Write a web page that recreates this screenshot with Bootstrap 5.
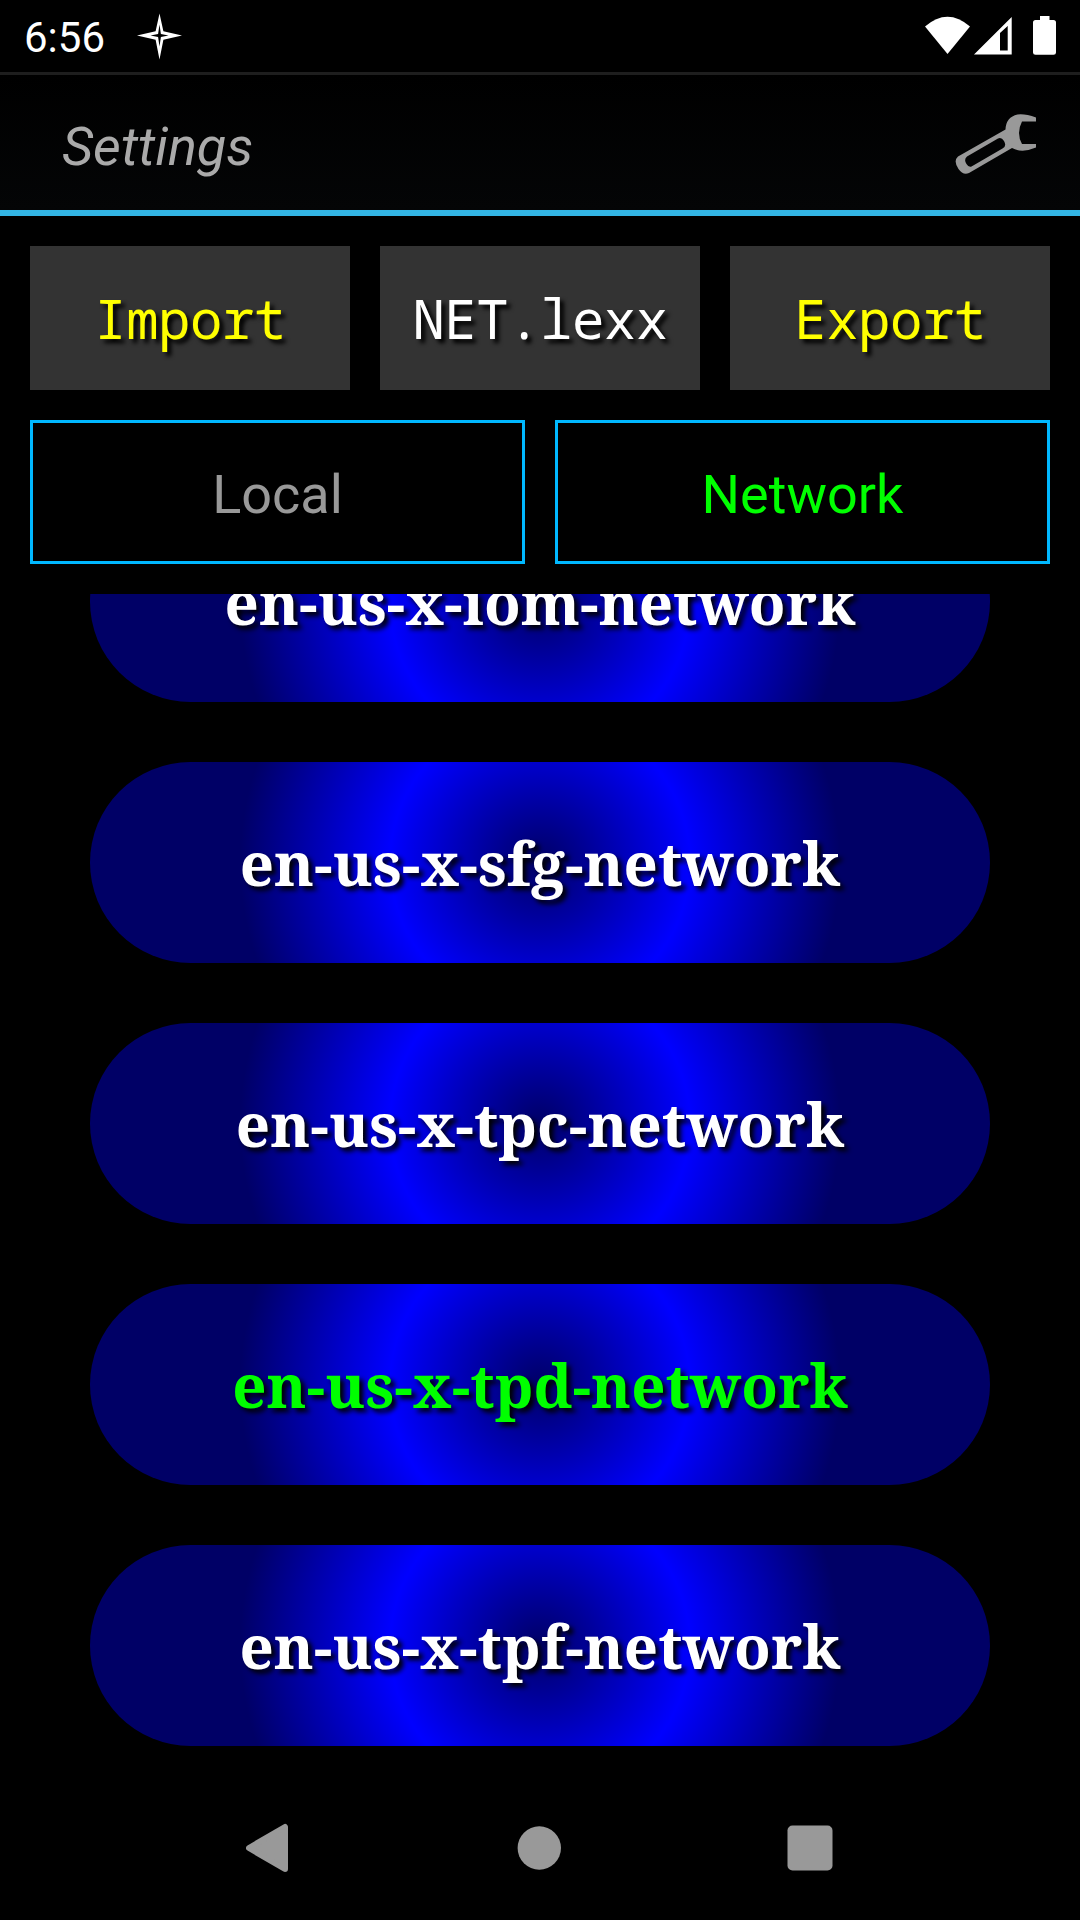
<!DOCTYPE html>
<html lang="en" data-bs-theme="dark">
<head>
<meta charset="utf-8">
<meta name="viewport" content="width=device-width, initial-scale=1">
<title>Settings</title>
<link rel="stylesheet" href="https://cdn.jsdelivr.net/npm/bootstrap@5.3.0/dist/css/bootstrap.min.css">
<style>
  body { background: #000; font-family: Roboto, sans-serif; height: 1920px; overflow: hidden; }
  .status-bar { height: 72px; padding: 0 24px 0 24px; color: #fff; font-size: 42px; line-height: 72px; }
  .clock { padding-top: 4px; }
  .app-bar { height: 144px; padding: 0 42px 0 62px; border-top: 3px solid #1e1e1e; border-bottom: 6px solid #33b5e5; background: linear-gradient(#000, #040506); }
  .app-title { color: #aaa; font-size: 54px; line-height: 1; font-style: italic; font-weight: 400; padding-top: 9px; }
  .panel { padding: 30px 30px 0; gap: 30px; }
  .tile { height: 144px; border: 0; border-radius: 0; background: #333; font-family: "Droid Sans Mono", "Noto Sans Mono", "DejaVu Sans Mono", monospace; font-size: 54px; letter-spacing: -.5px; line-height: 1; padding: 0; text-shadow: 4px 4px 4px #000; }
  .c-yellow { color: #ff0; }
  .c-lime { color: #0f0; }
  .c-gray { color: #999; }
  .tab-btn { height: 144px; border: 3px solid #00b8ff; border-radius: 0; background: #000; font-size: 54px; line-height: 1; padding: 5px 0 0; }
  .voices { height: 1182px; margin-top: 30px; padding: 0 90px; gap: 60px; }
  .voice { height: 201px; border: 0; border-radius: 101px; padding: 0; font-family: "Noto Serif", "DejaVu Serif", serif; font-weight: 700; font-size: 60px; letter-spacing: .05px; line-height: 1;
    background: radial-gradient(circle 300px at center, #006 0, #00f 50%, #006 100%); text-shadow: 4px 4px 5px #000; }
  .voice:first-child { margin-top: -93px; }
  .sys-nav { height: 144px; padding: 0 247px 0 246px; }
</style>
</head>
<body class="d-flex flex-column m-0">
  <header class="status-bar d-flex align-items-center justify-content-between flex-shrink-0">
    <div class="d-flex align-items-center">
      <span class="clock">6:56</span>
      <svg class="ms-4" width="60" height="72" viewBox="-.5 0 60 72"><path d="M30 13.500L33.900 31.200 52.500 35.500 33.900 39.800 30 59.500 26.100 39.800 7.500 35.500 26.100 31.200Z" fill="#fff"/><path d="M30 24.500L31.400 34 39 35.500 31.400 37 30 46.500 28.600 37 21 35.500 28.600 34Z" fill="#000"/></svg>
    </div>
    <svg width="146" height="72" viewBox="910 0 146 72" fill="#fff">
      <path d="M925 26.500Q947.500 7 970 26.500L947.500 54Z"/>
      <path fill-rule="evenodd" d="M974 54.500L1011.700 17V54.500ZM1000 33V50.500H1007.700V26Z"/>
      <path d="M1040 16h9.500v4h4q2.500 0 2.500 2.500v30q0 2.300-2.500 2.300h-18q-2.500 0-2.500-2.300v-30q0-2.500 2.500-2.500h4.500z"/>
    </svg>
  </header>

  <nav class="app-bar d-flex align-items-center justify-content-between flex-shrink-0">
    <h1 class="app-title mb-0">Settings</h1>
    <svg width="84" height="64" viewBox="954 111 84 64"><path fill="#999" fill-rule="evenodd" d="M1036 117.500V121.500H1022Q1016 133 1022 144H1036V147.500Q1022 153.500 1012 148L969 173Q963 175.500 958.500 169Q953 161 958 156.500L1005.500 129.500Q1006 117 1017.500 114.500Q1025 113.500 1036 117.500ZM998 138.500L967 156.500Q963.500 159.500 966.500 164Q968.500 167.500 971.500 166.500L1002.500 148.500Q1007 146.500 1004 141Q1001.500 137 998 138.500Z"/></svg>
  </nav>

  <main class="flex-shrink-0">
    <section class="panel d-flex">
      <button class="tile btn flex-fill w-100 c-yellow">Import</button>
      <button class="tile btn flex-fill w-100 text-white">NET.lexx</button>
      <button class="tile btn flex-fill w-100 c-yellow">Export</button>
    </section>
    <section class="panel d-flex">
      <button class="tab-btn btn flex-fill w-100 c-gray">Local</button>
      <button class="tab-btn btn flex-fill w-100 c-lime">Network</button>
    </section>
    <section class="voices d-flex flex-column overflow-hidden">
      <button class="voice btn flex-shrink-0 text-white">en-us-x-iom-network</button>
      <button class="voice btn flex-shrink-0 text-white">en-us-x-sfg-network</button>
      <button class="voice btn flex-shrink-0 text-white">en-us-x-tpc-network</button>
      <button class="voice btn flex-shrink-0 c-lime">en-us-x-tpd-network</button>
      <button class="voice btn flex-shrink-0 text-white">en-us-x-tpf-network</button>
    </section>
  </main>

  <footer class="sys-nav d-flex align-items-center justify-content-between flex-shrink-0">
    <svg width="44" height="52" viewBox="0 0 44 52"><path d="M3 26L39 5V47Z" fill="#999" stroke="#999" stroke-width="6" stroke-linejoin="round"/></svg>
    <svg width="44" height="44" viewBox="0 0 44 44"><circle cx="22.300" cy="22" r="21.700" fill="#999"/></svg>
    <svg width="46" height="46" viewBox="0 0 46 46"><rect x=".5" y=".5" width="45" height="45" rx="5" fill="#999"/></svg>
  </footer>
<script src="https://cdn.jsdelivr.net/npm/bootstrap@5.3.0/dist/js/bootstrap.bundle.min.js"></script>
</body>
</html>
